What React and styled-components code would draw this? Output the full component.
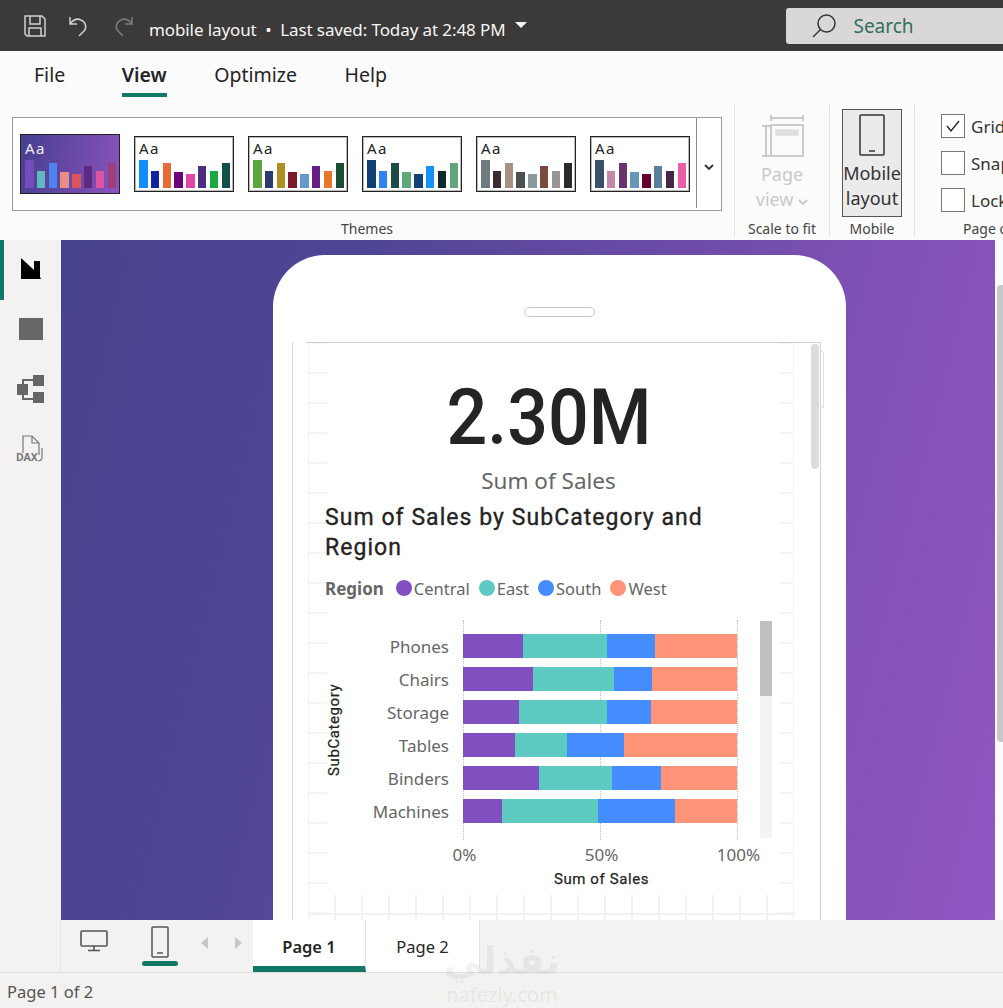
import React from 'react';
import styled, { createGlobalStyle } from 'styled-components';

const UI = '"Noto Sans", "Open Sans", sans-serif';
const DIN = 'Roboto, "Noto Sans", sans-serif';
const TEAL = '#117865';

const Global = createGlobalStyle`
  html, body { margin: 0; padding: 0; background: #f3f2f1; }
  * { box-sizing: border-box; }
`;

const Page = styled.div`
  width: 1003px;
  height: 1008px;
  overflow: hidden;
  position: relative;
  display: flex;
  flex-direction: column;
  font-family: ${UI};
`;

/* title bar */
const TitleBar = styled.header`
  height: 51px;
  flex: none;
  background: #3b3a39;
  display: flex;
  align-items: center;
  padding-left: 24px;
  color: #f5f5f5;
`;
const TitleIcon = styled.svg`
  width: 22px;
  height: 24px;
  margin-right: ${p => p.$gap}px;
  fill: none;
  stroke: ${p => p.$dim ? '#7d7c7b' : '#d2d0ce'};
  stroke-width: 1.5;
  flex: none;
`;
const DocTitle = styled.span`
  font-size: 17px;
  white-space: nowrap;
  letter-spacing: -0.1px;
  margin-left: -1px;
  padding-top: 7px;
`;
const Caret = styled.span`
  width: 0;
  height: 0;
  margin: 0 0 2px 10px;
  border-left: 6px solid transparent;
  border-right: 6px solid transparent;
  border-top: 6px solid #f5f5f5;
`;
const SearchBox = styled.div`
  margin-left: 259px;
  width: 240px;
  height: 36px;
  flex: none;
  background: #d9d8d7;
  border-radius: 3px;
  display: flex;
  align-items: center;
  gap: 17px;
  padding-left: 26px;
  color: #2f6f5f;
  font-size: 19px;
`;

/* ribbon */
const Ribbon = styled.section`
  height: 189px;
  flex: none;
  background: #fbfbfb;
  display: flex;
  flex-direction: column;
`;
const TabRow = styled.nav`
  height: 54px;
  flex: none;
  display: flex;
  padding-left: 34px;
  gap: 47.5px;
`;
const RibbonTab = styled.div`
  height: 46px;
  padding-top: 9px;
  font-size: 19.5px;
  color: #252423;
  font-weight: ${p => p.$active ? 600 : 400};
  border-bottom: 4px solid ${p => p.$active ? TEAL : 'transparent'};
  line-height: 30px;
  margin-right: ${p => p.$extra || 0}px;
`;
const Groups = styled.div`
  flex: 1;
  display: flex;
  min-height: 0;
`;
const Group = styled.div`
  width: ${p => p.$w}px;
  flex: none;
  display: flex;
  flex-direction: column;
  align-items: ${p => p.$start ? 'flex-start' : 'center'};
  border-right: ${p => p.$sep ? '1px solid #e3e3e3' : 'none'};
  margin-bottom: 3px;
`;
const GroupBody = styled.div`
  flex: 1;
  width: 100%;
`;
const GroupLabel = styled.div`
  font-size: 14px;
  line-height: 20px;
  color: #444;
  white-space: nowrap;
  padding-bottom: 1px;
  margin-bottom: -3px;
  padding-left: ${p => p.$indent || 0}px;
`;
const Gallery = styled.div`
  margin: 12px 0 0 12px;
  width: 710px;
  height: 94px;
  background: #fff;
  border: 1px solid #9a9a9a;
  display: flex;
  align-items: center;
  padding-left: 7px;
  gap: 14px;
  position: relative;
`;
const Thumb = styled.div`
  width: 100px;
  height: ${p => p.$dark ? 60 : 56}px;
  flex: none;
  border: 1px solid #222;
  outline: ${p => p.$dark ? 'none' : '1px solid #b9b9b9'};
  outline-offset: -2px;
  background: ${p => p.$dark ? 'linear-gradient(100deg, #45408f, #8a52bc)' : '#fff'};
  color: ${p => p.$dark ? '#eee' : '#222'};
  padding: ${p => p.$dark ? 3 : 1}px 0 0 4px;
  font-size: 15px;
  line-height: 20px;
  letter-spacing: 1.5px;
  display: flex;
  flex-direction: column;
`;
const ThumbBars = styled.div`
  display: flex;
  align-items: flex-end;
  gap: 3.3px;
  height: 28px;
  margin-top: 2px;
`;
const ThumbBar = styled.i`
  display: block;
  width: 8.5px;
  background: ${p => p.$c};
  opacity: ${p => p.$dim ? 0.85 : 1};
`;
const GalleryMore = styled.div`
  position: absolute;
  right: 0;
  top: 0;
  bottom: 2px;
  width: 25px;
  padding-top: 8px;
  border-left: 1px solid #8a8a8a;
  display: flex;
  align-items: center;
  justify-content: center;
`;
const BigLabel = styled.div`
  font-size: 18px;
  line-height: 25px;
  margin-top: ${p => p.$top || 0}px;
  text-align: center;
  color: ${p => p.$dim ? '#c9c9c9' : '#333'};
  white-space: nowrap;
`;
const ScaleBody = styled(GroupBody)`
  display: flex;
  flex-direction: column;
  align-items: center;
  padding-top: 9px;
`;
const MobileButton = styled.div`
  margin: 4px 0 0 12px;
  width: 60px;
  height: 108px;
  background: #ebebeb;
  border: 1px solid #555;
  display: flex;
  flex-direction: column;
  align-items: center;
  padding-top: 4px;
`;
const CheckList = styled(GroupBody)`
  padding: 9px 0 0 26px;
  display: flex;
  flex-direction: column;
  gap: 13px;
`;
const CheckRow = styled.div`
  display: flex;
  align-items: center;
  gap: 6px;
  height: 24px;
  font-size: 17px;
  color: #333;
  white-space: nowrap;
`;
const CheckBox = styled.span`
  width: 24px;
  height: 24px;
  flex: none;
  background: #fff;
  border: 1px solid #777;
  display: flex;
  align-items: center;
  justify-content: center;
`;

/* middle */
const Middle = styled.main`
  height: 680px;
  flex: none;
  display: flex;
`;
const Sidebar = styled.aside`
  width: 61px;
  flex: none;
  background: #f3f2f1;
  display: flex;
  flex-direction: column;
`;
const SideItem = styled.div`
  height: 60px;
  display: flex;
  align-items: center;
  justify-content: center;
  border-left: 4px solid ${p => p.$active ? TEAL : 'transparent'};
  padding: 0 4px 3px 0;
`;
const Canvas = styled.div`
  width: 934px;
  flex: none;
  overflow: hidden;
  background: linear-gradient(104deg, #48438f 0%, #4f4595 28%, #7c50b2 72%, #9356c2 100%);
  padding: 15px 0 0 212px;
`;
const RightRail = styled.div`
  flex: 1;
  background: #fbfbfb;
  padding: 45px 0 0 2px;
`;
const RailThumb = styled.div`
  height: 457px;
  background: #c8c8c8;
  border-radius: 4px 0 0 4px;
`;
const Phone = styled.div`
  width: 573px;
  height: 800px;
  background: #fff;
  border-radius: 52px 52px 0 0;
  padding-top: 52px;
`;
const Speaker = styled.div`
  width: 71px;
  height: 10px;
  margin: 0 auto 25px;
  border: 1px solid #c8c8c8;
  border-radius: 5px;
`;
const Screen = styled.div`
  margin-left: 19px;
  width: 529px;
  height: 600px;
  padding-top: 1px;
  border-left: 1px solid #d8d8d8;
  border-right: 1px solid #cfcfcf;
  padding-left: 15px;
  position: relative;
  &::before {
    content: '';
    position: absolute;
    left: 13px;
    right: 0;
    top: 0;
    height: 1px;
    background: #cfcfcf;
  }
`;
const ScreenScroll = styled.div`
  position: absolute;
  left: 518px;
  top: 2px;
  width: 8px;
  height: 125px;
  background: #dcdcdc;
  border-radius: 4px;
`;
const ScreenHandle = styled.div`
  position: absolute;
  left: 527px;
  top: 8px;
  width: 4px;
  height: 58px;
  border: 1px solid #e2e2e2;
  border-left: none;
  border-radius: 0 4px 0 0;
`;
const Report = styled.div`
  width: 486px;
  height: 100%;
  border-left: 1px solid #f2f2f2;
  border-right: 1px solid #f2f2f2;
  background:
    linear-gradient(#f5f5f5 0 2px, transparent 2px) left 0 top 29px / 18px 30px repeat-y,
    linear-gradient(#f5f5f5 0 2px, transparent 2px) right 0 top 29px / 14px 30px repeat-y;
  display: flex;
  flex-direction: column;
  position: relative;
`;
const BigValue = styled.div`
  font-family: ${DIN};
  font-weight: 500;
  font-size: 78px;
  line-height: 80px;
  color: #252423;
  text-align: center;
  margin-top: 35px;
  transform: translateX(-2px) scaleX(0.92);
`;
const ValueLabel = styled.div`
  font-size: 22.5px;
  line-height: 30px;
  color: #666;
  text-align: center;
  margin-top: 8px;
  margin-left: -5px;
`;
const ChartTitle = styled.h2`
  font-family: ${DIN};
  font-weight: 400;
  -webkit-text-stroke: 0.35px #252423;
  font-size: 23px;
  line-height: 30px;
  letter-spacing: 1.05px;
  color: #252423;
  margin: 7px 0 0 16px;
  width: 400px;
`;
const Legend = styled.div`
  display: flex;
  align-items: center;
  margin: 10px 0 0 16px;
  height: 30px;
  font-size: 16.5px;
  color: #666;
`;
const LegendTitle = styled.span`
  font-size: 17px;
  font-weight: 700;
  margin-right: 12px;
`;
const LegendItem = styled.span`
  display: flex;
  align-items: center;
  gap: 2px;
  margin-right: 9px;
  &::before {
    content: '';
    width: 16px;
    height: 16px;
    border-radius: 50%;
    background: ${p => p.$c};
  }
`;
const ChartWrap = styled.div`
  display: flex;
  margin: 17px 0 0 16px;
`;
const YTitle = styled.div`
  width: 18px;
  height: 220px;
  flex: none;
  writing-mode: vertical-rl;
  transform: rotate(180deg);
  font-family: ${DIN};
  font-weight: 400;
  -webkit-text-stroke: 0.25px #252423;
  font-size: 15px;
  letter-spacing: 0.6px;
  color: #252423;
  display: flex;
  align-items: center;
  justify-content: center;
`;
const ChartBody = styled.div`
  width: 395px;
  flex: none;
  position: relative;
  padding: 14px 0 17px;
  display: flex;
  flex-direction: column;
  gap: 9px;
`;
const GridLines = styled.div`
  position: absolute;
  left: 120px;
  width: 275px;
  top: 0;
  bottom: 0;
  display: flex;
  justify-content: space-between;
`;
const GridLine = styled.i`
  display: block;
  width: 0;
  border-left: 1px dotted #bcbcbc;
`;
const BarRow = styled.div`
  display: flex;
  align-items: center;
  height: 24px;
  position: relative;
`;
const BarLabel = styled.div`
  width: 106px;
  margin-right: 14px;
  text-align: right;
  font-size: 17px;
  color: #666;
  flex: none;
`;
const Bar = styled.div`
  width: 274px;
  height: 24px;
  display: flex;
`;
const Segment = styled.div`
  height: 100%;
  background: ${p => p.$c};
`;
const ChartScroll = styled.div`
  width: 12px;
  height: 217px;
  margin: 1px 0 0 22px;
  background: #f3f3f3;
  flex: none;
  position: relative;
  &::before {
    content: '';
    display: block;
    height: 75px;
    background: #bfbfbf;
  }
`;
const Axis = styled.div`
  margin: 2px 0 0 155px;
  width: 275px;
  height: 26px;
  display: flex;
  justify-content: space-between;
  font-size: 17px;
  line-height: 26px;
  color: #666;
`;
const AxisTick = styled.span`
  width: 1px;
  display: flex;
  justify-content: center;
  white-space: nowrap;
`;
const AxisTitle = styled.div`
  margin: 0 0 0 155px;
  width: 275px;
  text-align: center;
  font-family: ${DIN};
  font-weight: 400;
  -webkit-text-stroke: 0.25px #252423;
  font-size: 15px;
  line-height: 22px;
  letter-spacing: 0.6px;
  color: #252423;
`;
const GridFoot = styled.div`
  margin-top: 5px;
  height: 30px;
  background:
    linear-gradient(#f1f1f1, #f1f1f1) left 0 top 18px / 100% 2px no-repeat,
    repeating-linear-gradient(to right, transparent 0 25px, #f2f2f2 25px 27px);
`;

/* bottom */
const PageBar = styled.div`
  height: 52px;
  flex: none;
  background: #f3f2f1;
  display: flex;
  padding-left: 60px;
  position: relative;
`;
const ViewButton = styled.div`
  width: ${p => p.$w}px;
  flex: none;
  display: flex;
  flex-direction: column;
  align-items: center;
  padding-top: ${p => p.$top}px;
  border-left: ${p => p.$edge ? '1px solid #e8e6e4' : 'none'};
`;
const ViewPill = styled.span`
  width: 36px;
  height: 5px;
  margin-top: 3px;
  background: ${TEAL};
  border-radius: 3px;
`;
const Pager = styled.div`
  width: 59px;
  display: flex;
  padding: 17px 0 0 7px;
  gap: 27px;
`;
const PagerArrow = styled.span`
  width: 0;
  height: 0;
  border-top: 6px solid transparent;
  border-bottom: 6px solid transparent;
  ${p => p.$right ? 'border-left: 7px solid #c8c8c8;' : 'border-right: 7px solid #c8c8c8;'}
`;
const PageTab = styled.div`
  width: ${p => p.$w}px;
  flex: none;
  background: #fff;
  border-right: 1px solid #e3e3e3;
  border-bottom: 6px solid ${p => p.$active ? TEAL : '#fff'};
  font-weight: ${p => p.$active ? 600 : 400};
  font-size: 16.5px;
  color: #252423;
  text-align: center;
  line-height: 54px;
  height: 52px;
`;
const StatusBar = styled.footer`
  flex: 1;
  background: #f3f2f1;
  border-top: 1px solid #e1dfdd;
  border-bottom: 1px solid #111;
  padding-left: 7px;
  font-size: 16.5px;
  line-height: 38px;
  color: #555;
`;
const Watermark = styled.div`
  position: absolute;
  left: 441px;
  top: 938px;
  width: 122px;
  text-align: center;
  color: rgba(60, 60, 60, 0.08);
  font-family: "DejaVu Sans", sans-serif;
  pointer-events: none;
`;
const WatermarkArabic = styled.div`
  font-size: 38px;
  font-weight: 700;
  line-height: 46px;
  white-space: nowrap;
`;
const WatermarkLatin = styled.div`
  font-family: ${UI};
  font-size: 20px;
  line-height: 22px;
`;

const THEMES = [
  ['#7b4cc0', '#5fcdc5', '#4a8dff', '#ff9a80', '#f0564f', '#5a2378', '#ee559e', '#a23b72'],
  ['#118dff', '#12239e', '#e66c37', '#6b007b', '#e044a7', '#4a2f80', '#1aab40', '#124e4a'],
  ['#5ea53f', '#2c3a6e', '#ad8f24', '#7c1a2d', '#6699cc', '#651d87', '#e8762b', '#1b4d33'],
  ['#0f3f75', '#2f82f0', '#1a4b45', '#5ea77a', '#124377', '#1592f5', '#0d2a2c', '#5fa67f'],
  ['#6e7a7d', '#3b2d2f', '#a79182', '#4a4f50', '#8a9a9c', '#7a4a3e', '#9a9592', '#2a2c2c'],
  ['#3a5068', '#c586ab', '#6a356f', '#6797b8', '#650030', '#5a7f9d', '#452848', '#ee5ea8'],
];
const THUMB_HEIGHTS = [28, 17, 25, 16, 14, 22, 17, 25];

const REGIONS = [
  ['Central', '#8150c0'],
  ['East', '#5ecbc3'],
  ['South', '#458cff'],
  ['West', '#ff9479'],
];
const ROWS = [
  ['Phones', [180, 253, 145, 246]],
  ['Chairs', [212, 242, 114, 256]],
  ['Storage', [169, 264, 131, 260]],
  ['Tables', [155, 158, 172, 339]],
  ['Binders', [230, 219, 148, 227]],
  ['Machines', [116, 290, 233, 185]],
];

const Chevron = ({ color = '#333' }) => (
  <svg width="10" height="7" viewBox="0 0 10 7" fill="none" stroke={color} strokeWidth="1.8">
    <path d="M1 1l4 4 4-4" />
  </svg>
);

const PhoneGlyph = ({ w, h, color, sw = 1.5 }) => (
  <svg width={w} height={h} viewBox={`0 0 ${w} ${h}`} fill="none" stroke={color} strokeWidth={sw}>
    <rect x="1" y="1" width={w - 2} height={h - 2} rx="1" />
    <path d={`M${w / 2 - 3} ${h - 5}h6`} />
  </svg>
);

export default function App() {
  return (
    <Page>
      <Global />
      <TitleBar>
        <TitleIcon $gap={22} viewBox="0 0 22 24">
          <path d="M1 2h17l3 3v17H3l-2-2z" />
          <path d="M6 2v8h10V2M5 22v-8h12v8" />
        </TitleIcon>
        <TitleIcon $gap={22} viewBox="0 0 22 24">
          <path d="M2 3v7h7M2 10c3-4 7-6 11-4 5 2 6 8 3 11l-5 5" />
        </TitleIcon>
        <TitleIcon $gap={16} $dim viewBox="0 0 22 24">
          <path d="M20 3v7h-7M20 10c-3-4-7-6-11-4-5 2-6 8-3 11l5 5" />
        </TitleIcon>
        <DocTitle>mobile layout&nbsp; •&nbsp; Last saved: Today at 2:48 PM</DocTitle>
        <Caret />
        <SearchBox>
          <svg width="24" height="24" viewBox="0 0 24 24" fill="none" stroke="#333" strokeWidth="1.5">
            <circle cx="14.5" cy="9.5" r="8.5" />
            <path d="M8.5 15.5L1 23" />
          </svg>
          Search
        </SearchBox>
      </TitleBar>

      <Ribbon>
        <TabRow>
          <RibbonTab $extra={9}>File</RibbonTab>
          <RibbonTab $active>View</RibbonTab>
          <RibbonTab>Optimize</RibbonTab>
          <RibbonTab>Help</RibbonTab>
        </TabRow>
        <Groups>
          <Group $w={735} $sep>
            <GroupBody>
              <Gallery>
                {THEMES.map((colors, i) => (
                  <Thumb key={i} $dark={i === 0}>
                    Aa
                    <ThumbBars>
                      {colors.map((c, j) => (
                        <ThumbBar key={j} $c={c} $dim={i === 0} style={{ height: THUMB_HEIGHTS[j] }} />
                      ))}
                    </ThumbBars>
                  </Thumb>
                ))}
                <GalleryMore><Chevron /></GalleryMore>
              </Gallery>
            </GroupBody>
            <GroupLabel>Themes</GroupLabel>
          </Group>
          <Group $w={95} $sep>
            <ScaleBody>
              <svg width="44" height="44" viewBox="0 0 44 44" fill="none" stroke="#bdbdbd" strokeWidth="1.5">
                <path d="M11 1v6M43 1v6M11 4h32M2 12h8M2 42h8M6 12v30" />
                <rect x="11" y="11" width="32" height="31" />
                <rect x="16" y="16" width="22" height="5" fill="#dedede" stroke="#dedede" />
              </svg>
              <BigLabel $dim $top={4}>Page</BigLabel>
              <BigLabel $dim>view <Chevron color="#c9c9c9" /></BigLabel>
            </ScaleBody>
            <GroupLabel>Scale to fit</GroupLabel>
          </Group>
          <Group $w={85} $sep>
            <GroupBody>
              <MobileButton>
                <PhoneGlyph w={26} h={42} color="#333" />
                <BigLabel $top={5}>Mobile</BigLabel>
                <BigLabel>layout</BigLabel>
              </MobileButton>
            </GroupBody>
            <GroupLabel>Mobile</GroupLabel>
          </Group>
          <Group $w={200} $start>
            <CheckList>
              <CheckRow>
                <CheckBox>
                  <svg width="16" height="14" viewBox="0 0 16 14" fill="none" stroke="#222" strokeWidth="1.4">
                    <path d="M2 7l4 5 8-10" />
                  </svg>
                </CheckBox>
                Gridlines
              </CheckRow>
              <CheckRow><CheckBox />Snap to grid</CheckRow>
              <CheckRow><CheckBox />Lock objects</CheckRow>
            </CheckList>
            <GroupLabel $indent={48}>Page options</GroupLabel>
          </Group>
        </Groups>
      </Ribbon>

      <Middle>
        <Sidebar>
          <SideItem $active>
            <svg width="22" height="22" viewBox="0 0 22 22" fill="#000">
              <path d="M1 0l13 12V3h6v16l1 2H1z" />
            </svg>
          </SideItem>
          <SideItem>
            <svg width="24" height="22" viewBox="0 0 24 22" fill="#666"><rect width="24" height="22" /></svg>
          </SideItem>
          <SideItem>
            <svg width="28" height="28" viewBox="0 0 28 28" fill="#666" stroke="#666">
              <rect x="0.5" y="9.5" width="10" height="10" />
              <rect x="16.5" y="0.5" width="10" height="10" />
              <rect x="16.5" y="17.5" width="10" height="10" />
              <path d="M6 9V5h10M6 20v4h10" fill="none" strokeWidth="2" />
            </svg>
          </SideItem>
          <SideItem>
            <svg width="30" height="28" viewBox="0 0 30 28" fill="none" stroke="#777" strokeWidth="1.2">
              <path d="M7 18V1h9l7 7v12" />
              <path d="M16 1v7h7M26 13v9c0 2-1 4-4 4" />
              <text x="0" y="26" fontSize="10.5" fontWeight="700" fontFamily="Noto Sans" fill="#777" stroke="none">DAX</text>
            </svg>
          </SideItem>
        </Sidebar>
        <Canvas>
          <Phone>
            <Speaker />
            <Screen>
              <ScreenScroll />
              <ScreenHandle />
              <Report>
                <BigValue>2.30M</BigValue>
                <ValueLabel>Sum of Sales</ValueLabel>
                <ChartTitle>Sum of Sales by SubCategory and Region</ChartTitle>
                <Legend>
                  <LegendTitle>Region</LegendTitle>
                  {REGIONS.map(([name, c]) => (
                    <LegendItem key={name} $c={c}>{name}</LegendItem>
                  ))}
                </Legend>
                <ChartWrap>
                  <YTitle>SubCategory</YTitle>
                  <ChartBody>
                    <GridLines><GridLine /><GridLine /><GridLine /></GridLines>
                    {ROWS.map(([name, parts]) => {
                      const total = parts.reduce((a, b) => a + b, 0);
                      return (
                        <BarRow key={name}>
                          <BarLabel>{name}</BarLabel>
                          <Bar>
                            {parts.map((v, i) => (
                              <Segment key={i} $c={REGIONS[i][1]} style={{ width: `${(v / total) * 100}%` }} />
                            ))}
                          </Bar>
                        </BarRow>
                      );
                    })}
                  </ChartBody>
                  <ChartScroll />
                </ChartWrap>
                <Axis>
                  <AxisTick>0%</AxisTick>
                  <AxisTick>50%</AxisTick>
                  <AxisTick>100%</AxisTick>
                </Axis>
                <AxisTitle>Sum of Sales</AxisTitle>
                <GridFoot />
              </Report>
            </Screen>
          </Phone>
        </Canvas>
        <RightRail><RailThumb /></RightRail>
      </Middle>

      <PageBar>
        <ViewButton $w={66} $top={10} $edge>
          <svg width="28" height="22" viewBox="0 0 28 22" fill="none" stroke="#555" strokeWidth="1.6">
            <rect x="1" y="1" width="26" height="15" rx="1" />
            <path d="M14 16v4M8 20.5h12" />
          </svg>
        </ViewButton>
        <ViewButton $w={68} $top={6}>
          <PhoneGlyph w={18} h={32} color="#555" />
          <ViewPill />
        </ViewButton>
        <Pager>
          <PagerArrow />
          <PagerArrow $right />
        </Pager>
        <PageTab $w={113} $active>Page 1</PageTab>
        <PageTab $w={114}>Page 2</PageTab>
      </PageBar>
      <StatusBar>Page 1 of 2</StatusBar>
      <Watermark>
        <WatermarkArabic>نفذلي</WatermarkArabic>
        <WatermarkLatin>nafezly.com</WatermarkLatin>
      </Watermark>
    </Page>
  );
}
